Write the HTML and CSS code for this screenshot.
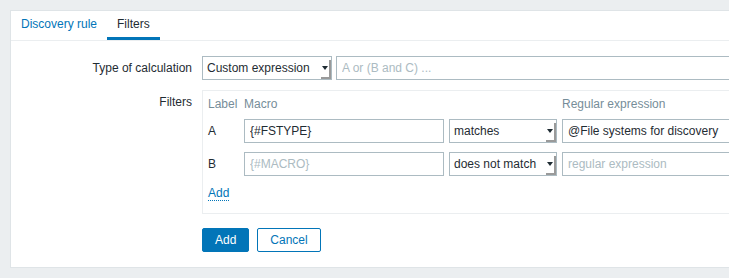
FILE: index.html
```html
<!DOCTYPE html>
<html lang="en">
<head>
  <meta charset="UTF-8">
  <meta name="viewport" content="width=device-width, initial-scale=1.0">
  <title>Discovery rule filters</title>
  <link rel="stylesheet" href="styles.css">
</head>
<body>
  <div class="container">
    <ul class="tabs">
      <li><a class="tab" href="#">Discovery rule</a></li>
      <li><a class="tab active" href="#">Filters</a></li>
    </ul>

    <form class="form">
      <div class="form-row">
        <label class="form-label">Type of calculation</label>
        <div class="form-field calc">
          <div class="select select-calc">Custom expression</div>
          <input class="input input-formula" type="text" placeholder="A or (B and C) ...">
        </div>
      </div>

      <div class="form-row">
        <label class="form-label">Filters</label>
        <div class="form-field">
          <div class="filter-box">
            <div class="filter-grid">
              <span class="col-head">Label</span>
              <span class="col-head">Macro</span>
              <span></span>
              <span class="col-head">Regular expression</span>

              <span class="row-label">A</span>
              <input class="input" type="text" value="{#FSTYPE}">
              <div class="select select-op">matches</div>
              <input class="input" type="text" value="@File systems for discovery">

              <span class="row-label">B</span>
              <input class="input" type="text" placeholder="{#MACRO}">
              <div class="select select-op">does not match</div>
              <input class="input" type="text" placeholder="regular expression">
            </div>
            <a class="link-add" href="#">Add</a>
          </div>
        </div>
      </div>

      <div class="form-row">
        <span class="form-label"></span>
        <div class="form-field buttons">
          <button class="btn btn-primary" type="button">Add</button>
          <button class="btn btn-alt" type="button">Cancel</button>
        </div>
      </div>
    </form>
  </div>
</body>
</html>
```

FILE: styles.css
```css
body {
  margin: 0;
  padding: 10px 0 0 10px;
  height: 278px;
  box-sizing: border-box;
  background: #ebeef0;
  font-family: "Liberation Sans", Arial, sans-serif;
  font-size: 12px;
  color: #1f2c33;
  overflow: hidden;
}

/* the panel runs on past the right edge of the window */
.container {
  overflow: hidden;
  background: #ffffff;
  border-top: 1px solid #dfe4e7;
  border-left: 1px solid #dfe4e7;
  border-bottom: 1px solid #dfe4e7;
}

/* Tabs */
.tabs {
  display: flex;
  margin: 0;
  padding: 0;
  list-style: none;
  height: 29px;
  border-bottom: 1px solid #ebeef0;
}

.tab {
  display: block;
  padding: 1px 10px 0;
  line-height: 25px;
  border-bottom: 3px solid transparent;
  color: #0275b8;
  text-decoration: none;
}

.tab.active {
  color: #1f2c33;
  border-bottom-color: #0275b8;
}

/* Form */
.form {
  padding: 15px 0 15px;
  display: flex;
  flex-direction: column;
  gap: 10px;
}

.form-row {
  display: flex;
  align-items: flex-start;
}

.form-label {
  flex: none;
  width: 181px;
  margin-right: 10px;
  padding-top: 5px;
  line-height: 14px;
  text-align: right;
}

.form-field {
  display: flex;
  align-items: center;
}

.calc {
  gap: 4px;
}

.input {
  flex: none;
  box-sizing: border-box;
  width: 200px;
  height: 24px;
  margin: 0;
  padding: 0 5px;
  border: 1px solid #acbbc2;
  background: #ffffff;
  font-family: inherit;
  font-size: 12px;
  color: #1f2c33;
  outline: none;
}

.input::placeholder {
  color: #acbbc2;
}

.input-formula {
  width: 500px;
}

.select {
  flex: none;
  position: relative;
  box-sizing: border-box;
  height: 24px;
  line-height: 22px;
  padding: 0 14px 0 4px;
  border: 1px solid #acbbc2;
  background: #ffffff;
  white-space: nowrap;
}

.select::before {
  content: "";
  position: absolute;
  right: 0;
  top: 3px;
  bottom: 0;
  width: 8px;
  border-right: 2px solid #9a9a9a;
  border-bottom: 2px solid #9a9a9a;
}

.select::after {
  content: "";
  position: absolute;
  right: 3px;
  top: 9px;
  border-left: 3px solid transparent;
  border-right: 3px solid transparent;
  border-top: 4px solid #1f2c33;
}

.select-calc {
  width: 130px;
}

.select-op {
  width: 108px;
}

/* Filter table */
.filter-box {
  flex: none;
  border: 1px solid #ebeef0;
  padding: 6px 0 12px 5px;
  width: 800px;
}

.filter-grid {
  display: grid;
  grid-template-columns: 31px 200px 108px 200px;
  column-gap: 5px;
  row-gap: 9px;
  align-items: center;
}

.filter-grid .col-head {
  color: #768d99;
  line-height: 14px;
  margin-bottom: -1px;
}

.row-label {
  line-height: 14px;
}

.link-add {
  display: inline-block;
  margin-top: 10px;
  line-height: 14px;
  color: #0275b8;
  text-decoration: none;
  border-bottom: 1px dotted #0275b8;
}

/* Buttons */
.buttons {
  gap: 8px;
  padding-top: 4px;
}

.btn {
  height: 24px;
  padding: 0 12px;
  border: 1px solid #0275b8;
  border-radius: 2px;
  font-family: inherit;
  font-size: 12px;
  cursor: pointer;
}

.btn-primary {
  background: #0275b8;
  color: #ffffff;
}

.btn-alt {
  background: #ffffff;
  color: #0275b8;
}
```
